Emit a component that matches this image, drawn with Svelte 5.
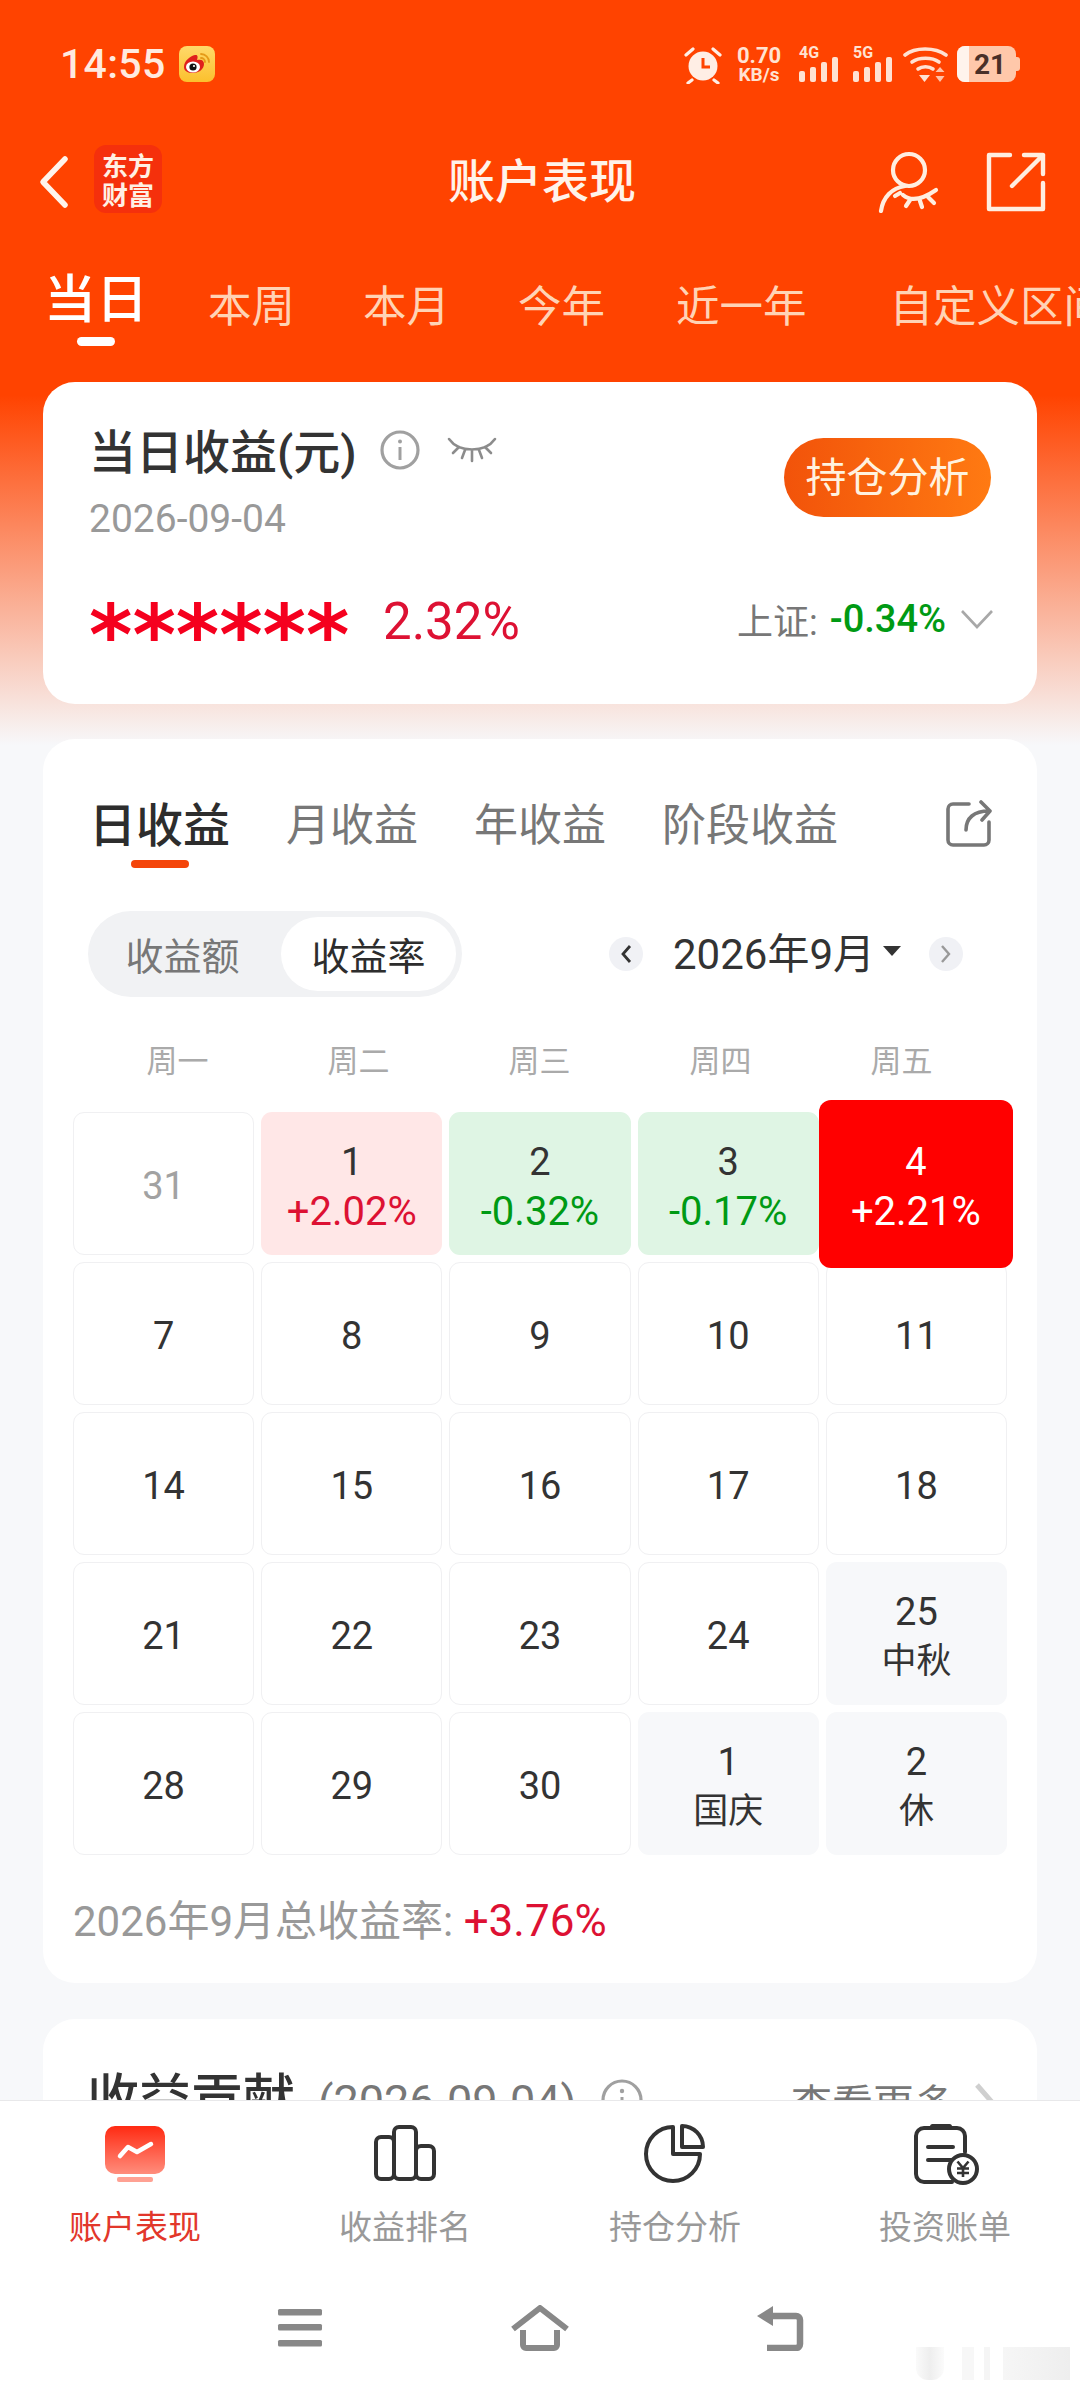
<script>
  const periods = ['本周', '本月', '今年', '近一年', '自定义区间'];
  const subTabs = ['月收益', '年收益', '阶段收益'];
  const weekdays = ['周一', '周二', '周三', '周四', '周五'];
  const cells = [
    { d: '31', cls: 'muted' },
    { d: '1', v: '+2.02%', cls: 'up' },
    { d: '2', v: '-0.32%', cls: 'down' },
    { d: '3', v: '-0.17%', cls: 'down' },
    { d: '4', v: '+2.21%', cls: 'active' },
    { d: '7' }, { d: '8' }, { d: '9' }, { d: '10' }, { d: '11' },
    { d: '14' }, { d: '15' }, { d: '16' }, { d: '17' }, { d: '18' },
    { d: '21' }, { d: '22' }, { d: '23' }, { d: '24' },
    { d: '25', v: '中秋', cls: 'holiday' },
    { d: '28' }, { d: '29' }, { d: '30' },
    { d: '1', v: '国庆', cls: 'holiday' },
    { d: '2', v: '休', cls: 'holiday' }
  ];
</script>

<div class="page">
  <div class="scroll">
    <div class="status">
      <div class="status-left">
        <span class="time">14:55</span>
        <svg class="weibo" width="36" height="36" viewBox="0 0 36 36">
          <defs>
            <linearGradient id="wb" x1="0" y1="0" x2="0" y2="1">
              <stop offset="0" stop-color="#ffd96a" />
              <stop offset="1" stop-color="#fbc02d" />
            </linearGradient>
          </defs>
          <rect width="36" height="36" rx="8" fill="url(#wb)" />
          <path d="M22 8a8 8 0 0 1 8 8M22 12a4 4 0 0 1 4 4" fill="none" stroke="#e59a18" stroke-width="1.8" stroke-linecap="round" />
          <path d="M5 21c0-6 6-11 11-12 3-.6 3 2 2 5 4-1 7 0 7 4 0 5-5 9-11 9-5 0-9-2-9-6z" fill="#e0201c" />
          <ellipse cx="14" cy="21" rx="7" ry="5.5" fill="#fff" />
          <circle cx="14" cy="21" r="3.6" fill="#111" />
          <circle cx="15" cy="20" r="1.1" fill="#fff" />
        </svg>
      </div>
      <div class="status-right">
        <svg class="alarm" width="38" height="38" viewBox="0 0 38 38">
          <circle cx="19" cy="20" r="14.5" fill="#ffeee5" />
          <path d="M19 12v9h7" fill="none" stroke="#ff4300" stroke-width="3" />
          <path d="M2 9l7-6M36 9l-7-6M8 34l-4 3M30 34l4 3" stroke="#ffeee5" stroke-width="3.2" stroke-linecap="round" />
        </svg>
        <div class="speed"><b>0.70</b><b class="kb">KB/s</b></div>
        <div class="sim first">
          <b>4G</b>
          <svg width="40" height="26" viewBox="0 0 40 26">
            <g fill="#ffe2d2">
              <rect x="0" y="14" width="6" height="11" rx="2" />
              <rect x="11" y="10" width="6" height="15" rx="2" />
              <rect x="22" y="5" width="6" height="20" rx="2" />
              <rect x="33" y="0" width="6" height="25" rx="2" />
            </g>
          </svg>
        </div>
        <div class="sim">
          <b>5G</b>
          <svg width="40" height="26" viewBox="0 0 40 26">
            <g fill="#ffe2d2">
              <rect x="0" y="14" width="6" height="11" rx="2" />
              <rect x="11" y="10" width="6" height="15" rx="2" />
              <rect x="22" y="5" width="6" height="20" rx="2" />
              <rect x="33" y="0" width="6" height="25" rx="2" />
            </g>
          </svg>
        </div>
        <svg class="wifi" width="46" height="37" viewBox="0 0 46 37">
          <g fill="none" stroke="#ffe2d2" stroke-width="3.6" stroke-linecap="round">
            <path d="M2 9C12 1 32 1 43 9" />
            <path d="M9 16c7-5 20-5 27 0" />
            <path d="M15 23c4-3 11-3 15 0" />
          </g>
          <path d="M16 29h11l-5.500 7z" fill="#ffe2d2" />
          <path d="M37 21l4.500 5h-9zM37 36l-4.500-6h9z" fill="#ffe2d2" opacity=".8" />
        </svg>
        <div class="battery">
          <div class="batt-body">
            <span class="batt-fill"></span>
            <span class="batt-num">21</span>
          </div>
          <span class="batt-cap"></span>
        </div>
      </div>
    </div>

    <div class="nav">
      <div class="nav-left">
        <svg width="32" height="54" viewBox="0 0 32 54">
          <path d="M27 4L5 27l22 23" fill="none" stroke="#fff4ec" stroke-width="5.500" stroke-linecap="round" stroke-linejoin="round" />
        </svg>
        <div class="logo"><span>东方</span><span>财富</span></div>
      </div>
      <div class="title">账户表现</div>
      <div class="nav-right">
        <svg width="62" height="62" viewBox="0 0 62 62">
          <g fill="none" stroke="#ffeee0" stroke-width="4.200" stroke-linecap="round">
            <circle cx="31" cy="19" r="16" />
            <path d="M27 35C14 37 5 46 3 60" />
            <path d="M25 44c7 6 17 6 33-5M32 49l-4 6M42 50l2 6M50 46l6 6M22 42l-5 3" />
          </g>
        </svg>
        <svg width="60" height="60" viewBox="0 0 60 60">
          <path d="M24 3H3v54h54V31M38 3h19v19M57 3L26 34" fill="none" stroke="#ffeee0" stroke-width="4.400" stroke-linejoin="round" stroke-linecap="round" />
        </svg>
      </div>
    </div>

    <div class="periods">
      <div class="period-active">
        <span>当日</span>
        <i></i>
      </div>
      {#each periods as p}
        <span class="period">{p}</span>
      {/each}
    </div>

    <section class="card summary">
      <div class="sum-top">
        <div>
          <div class="sum-title">
            <span>当日收益(元)</span>
            <svg class="info" width="42" height="42" viewBox="0 0 42 42">
              <circle cx="21" cy="21" r="18" fill="none" stroke="#a0a0a0" stroke-width="3.200" />
              <path d="M21 18v13" stroke="#a0a0a0" stroke-width="3" />
              <circle cx="21" cy="12.500" r="2" fill="#a0a0a0" />
            </svg>
            <svg class="eye" width="50" height="30" viewBox="0 0 50 30">
              <path d="M2 3c10 14 36 14 46 0M12 11L6 17M25 15v10M38 11l6 6M18 14l-3 8M32 14l3 8" fill="none" stroke="#8c8c8c" stroke-width="2.600" stroke-linecap="round" />
            </svg>
          </div>
          <div class="sum-date">2026-09-04</div>
        </div>
        <div class="sum-btn">持仓分析</div>
      </div>
      <div class="sum-bottom">
        <div class="sum-left">
          <span class="stars">******</span>
          <span class="pct">2.32%</span>
        </div>
        <div class="sum-index">
          <span class="idx-name">上证:</span>
          <span class="idx-val">-0.34%</span>
          <svg width="34" height="20" viewBox="0 0 34 20">
            <path d="M2 2l15 16L32 2" fill="none" stroke="#a8a8a8" stroke-width="2.600" />
          </svg>
        </div>
      </div>
    </section>

    <section class="card cal">
      <div class="subtabs">
        <div class="sub-active"><span>日收益</span><i></i></div>
        {#each subTabs as s}<span class="sub">{s}</span>{/each}
        <svg class="share" width="48" height="48" viewBox="0 0 48 48">
          <path d="M24 4H8a5 5 0 0 0-5 5v31a5 5 0 0 0 5 5h31a5 5 0 0 0 5-5V22" fill="none" stroke="#777" stroke-width="3.600" stroke-linecap="round" />
          <path d="M21 30c0-12 8-19 23-19M36 2l9 9-8 9" fill="none" stroke="#777" stroke-width="3.600" stroke-linecap="round" stroke-linejoin="round" />
        </svg>
      </div>

      <div class="controls">
        <div class="toggle">
          <span class="tg">收益额</span>
          <span class="tg on">收益率</span>
        </div>
        <div class="month">
          <span class="circle">
            <svg width="12" height="20" viewBox="0 0 12 20"><path d="M10 2L3 10l7 8" fill="none" stroke="#333" stroke-width="2.800" /></svg>
          </span>
          <span class="month-text">2026年9月</span>
          <i class="caret"></i>
          <span class="circle">
            <svg width="12" height="20" viewBox="0 0 12 20"><path d="M2 2l7 8-7 8" fill="none" stroke="#999" stroke-width="2.400" /></svg>
          </span>
        </div>
      </div>

      <div class="weekdays">
        {#each weekdays as w}<span>{w}</span>{/each}
      </div>

      <div class="grid">
        {#each cells as c}
          <div class="cell {c.cls ?? ''}">
            <span class="d">{c.d}</span>
            {#if c.v}<span class="v">{c.v}</span>{/if}
          </div>
        {/each}
      </div>

      <div class="total">2026年9月总收益率: <span>+3.76%</span></div>
    </section>

    <section class="card contrib">
      <div class="contrib-left">
        <span class="c-title">收益贡献</span>
        <span class="c-date">(2026-09-04)</span>
        <svg width="44" height="44" viewBox="0 0 44 44">
          <circle cx="22" cy="22" r="19" fill="none" stroke="#a0a0a0" stroke-width="3.200" />
          <circle cx="22" cy="13" r="2.200" fill="#a0a0a0" />
          <path d="M22 19v14" stroke="#a0a0a0" stroke-width="3" />
        </svg>
      </div>
      <div class="contrib-right">
        <span>查看更多</span>
        <svg width="22" height="36" viewBox="0 0 22 36"><path d="M4 2l14 16L4 34" fill="none" stroke="#cfcfcf" stroke-width="5" /></svg>
      </div>
    </section>
  </div>

  <div class="bottom">
    <div class="tabs">
      <div class="tab on">
        <svg width="62" height="62" viewBox="0 0 62 62">
          <defs>
            <linearGradient id="act" x1="0" y1="0" x2="0" y2="1">
              <stop offset="0" stop-color="#ff2a12" />
              <stop offset="1" stop-color="#ff8d7c" />
            </linearGradient>
          </defs>
          <rect x="1" y="2" width="60" height="48" rx="10" fill="url(#act)" />
          <rect x="13" y="53" width="36" height="5" rx="2" fill="#ffa193" />
          <path d="M16 32l8-9 9 5 14-8" fill="none" stroke="#fff" stroke-width="4.500" stroke-linecap="round" stroke-linejoin="round" />
        </svg>
        <span>账户表现</span>
      </div>
      <div class="tab">
        <svg width="62" height="62" viewBox="0 0 62 62">
          <g fill="none" stroke="#333" stroke-width="4">
            <rect x="2" y="13" width="18" height="42" rx="5" />
            <rect x="20" y="3" width="22" height="52" rx="5" />
            <rect x="42" y="22" width="18" height="33" rx="5" />
          </g>
        </svg>
        <span>收益排名</span>
      </div>
      <div class="tab">
        <svg width="62" height="62" viewBox="0 0 62 62">
          <path d="M29 3A27 27 0 1 0 56 30H29Z" fill="none" stroke="#333" stroke-width="4" stroke-linejoin="round" />
          <path d="M38 2V23H59A21 21 0 0 0 38 2Z" fill="none" stroke="#333" stroke-width="4" stroke-linejoin="round" />
        </svg>
        <span>持仓分析</span>
      </div>
      <div class="tab">
        <svg class="bill" width="62" height="62" viewBox="0 0 62 62">
          <path d="M51 28V12a8 8 0 0 0-8-8H10a8 8 0 0 0-8 8V50a8 8 0 0 0 8 8H38" fill="none" stroke="#333" stroke-width="4" stroke-linecap="round" />
          <rect x="16" y="0" width="22" height="5" rx="2.500" fill="#333" />
          <path d="M14 23H39M14 36H38" stroke="#333" stroke-width="4" stroke-linecap="round" />
          <circle cx="49" cy="45" r="14" fill="#fff" stroke="#333" stroke-width="4" />
          <path d="M43.500 37.500l5.500 6.500 5.500-6.500M43 44.500h12M43 49h12M49 44v9" fill="none" stroke="#333" stroke-width="2.600" />
        </svg>
        <span>投资账单</span>
      </div>
    </div>
    <div class="sysnav">
      <div class="sys">
        <svg width="46" height="38" viewBox="0 0 46 38">
          <g fill="#888"><rect x="1" y="0" width="44" height="6.500" rx="1.500" /><rect x="1" y="15" width="44" height="6.500" rx="1.500" /><rect x="1" y="31" width="44" height="6.500" rx="1.500" /></g>
        </svg>
      </div>
      <div class="sys">
        <svg width="60" height="46" viewBox="0 0 60 46">
          <path d="M3 24L30 3l27 21M13 25v15a3 3 0 0 0 3 3h28a3 3 0 0 0 3-3V25" fill="none" stroke="#888" stroke-width="6" stroke-linejoin="round" />
        </svg>
      </div>
      <div class="sys">
        <svg width="50" height="46" viewBox="0 0 50 46">
          <path d="M18 11h23a4 4 0 0 1 4 4v24a4 4 0 0 1-4 4H12" fill="none" stroke="#888" stroke-width="6.500" />
          <path d="M18 1v20L2 11z" fill="#888" />
        </svg>
      </div>
    </div>
    <div class="watermark">
      <i class="w1"></i><i class="w2"></i><i class="w3"></i><i class="w4"></i>
    </div>
  </div>
</div>

<style>
  :global(body) {
    margin: 0;
    background: #fff;
  }
  .page {
    width: 1080px;
    height: 2392px;
    display: flex;
    flex-direction: column;
    overflow: hidden;
    font-family: Roboto, "Noto Sans CJK SC", sans-serif;
    color: #333;
  }
  .scroll {
    height: 2100px;
    flex: none;
    overflow: hidden;
    background: linear-gradient(180deg, #ff4300 0, #ff4300 395px, #f7f8fa 745px);
  }

  /* status bar */
  .status {
    height: 134px;
    box-sizing: border-box;
    padding: 46px 60px 0 60px;
    display: flex;
    justify-content: space-between;
    align-items: flex-start;
  }
  .status-left {
    display: flex;
    align-items: center;
    gap: 13px;
  }
  .time {
    font-size: 41px;
    line-height: 36px;
    font-weight: 500;
    color: #ffeadf;
    letter-spacing: 0.3px;
  }
  .status-right {
    display: flex;
    align-items: flex-start;
    height: 38px;
  }
  .speed {
    display: flex;
    flex-direction: column;
    align-items: center;
    margin-left: 14px;
    width: 46px;
    color: #ffe2d2;
  }
  .speed b {
    font-size: 22px;
    line-height: 20px;
    font-weight: 700;
  }
  .speed .kb {
    font-size: 19px;
    line-height: 18px;
  }
  .sim {
    width: 40px;
    margin-left: 14px;
    display: flex;
    flex-direction: column;
    height: 38px;
    color: #ffe2d2;
  }
  .sim.first { margin-left: 17px; }
  .sim b {
    font-size: 16px;
    line-height: 14px;
    font-weight: 700;
    height: 12px;
  }
  .sim svg { margin-top: -1px; }
  .wifi { margin-left: 10px; }
  .battery {
    margin-left: 8px;
    width: 63px;
    height: 36px;
    display: flex;
    align-items: center;
  }
  .batt-body {
    width: 59px;
    height: 36px;
    border-radius: 8px;
    overflow: hidden;
    background: #ffc8aa;
    display: flex;
    align-items: center;
  }
  .batt-fill {
    width: 12px;
    height: 36px;
    background: #fff3ec;
  }
  .batt-num {
    margin-left: 3px;
    width: 36px;
    text-align: center;
    font-size: 28px;
    font-weight: 700;
    color: #4a3028;
  }
  .batt-cap {
    width: 4px;
    height: 14px;
    background: #ffc8aa;
    border-radius: 0 3px 3px 0;
  }

  /* nav */
  .nav {
    height: 96px;
    display: grid;
    grid-template-columns: 1fr auto 1fr;
    align-items: center;
    padding: 0 34px 0 38px;
  }
  .nav-left {
    display: flex;
    align-items: center;
    gap: 24px;
  }
  .logo {
    width: 68px;
    height: 68px;
    margin-top: -6px;
    border-radius: 12px;
    background: #f5300c;
    display: flex;
    flex-direction: column;
    align-items: center;
    justify-content: center;
    color: #fff0e4;
    font-size: 26px;
    line-height: 29px;
    font-weight: 700;
    font-family: "Noto Sans CJK SC", sans-serif;
  }
  .title {
    font-size: 47px;
    line-height: 52px;
    font-weight: 500;
    color: #fff3ea;
  }
  .nav-right {
    display: flex;
    justify-content: flex-end;
    align-items: center;
    gap: 46px;
  }

  /* periods */
  .periods {
    height: 152px;
    box-sizing: border-box;
    display: flex;
    align-items: flex-start;
    gap: 68px;
    padding: 45px 0 0 44px;
    overflow: hidden;
    white-space: nowrap;
  }
  .period-active {
    flex: none;
    display: flex;
    flex-direction: column;
    align-items: center;
    font-size: 52px;
    line-height: 52px;
    font-weight: 500;
    color: #fff;
    margin-right: -8px;
  }
  .period-active i {
    display: block;
    width: 38px;
    height: 9px;
    margin-top: 10px;
    border-radius: 5px;
    background: #fff;
  }
  .period {
    flex: none;
    font-size: 43.5px;
    line-height: 44px;
    margin-top: 11px;
    color: #ffd3b5;
  }
  .period:nth-child(5) { margin-left: 3px; }
  .period:last-child { margin-left: 15px; }

  /* cards */
  .card {
    margin: 0 43px;
    background: #fff;
    border-radius: 32px;
  }
  .summary {
    height: 322px;
    box-sizing: border-box;
    padding: 45px 46px 0 46px;
  }
  .sum-top {
    display: flex;
    justify-content: space-between;
    align-items: flex-start;
    height: 111px;
  }
  .sum-title {
    display: flex;
    align-items: center;
    height: 46px;
    margin-top: 3px;
    font-size: 47px;
    line-height: 46px;
    font-weight: 500;
    color: #333;
  }
  .info { margin-left: 22px; margin-top: -6px; }
  .eye { margin-left: 26px; margin-top: -4px; }
  .sum-date {
    margin-top: 24px;
    font-size: 39px;
    line-height: 38px;
    color: #999;
  }
  .sum-btn {
    margin-top: 11px;
    width: 207px;
    height: 79px;
    border-radius: 40px;
    background: linear-gradient(90deg, #f2530a, #ff7a12);
    color: #fff2df;
    font-size: 41px;
    line-height: 80px;
    text-align: center;
  }
  .sum-bottom {
    display: flex;
    justify-content: space-between;
    align-items: center;
    margin-top: 64px;
    height: 40px;
  }
  .sum-left {
    display: flex;
    align-items: center;
    gap: 36px;
  }
  .stars {
    height: 40px;
    line-height: 68px;
    font-family: "DejaVu Sans", sans-serif;
    font-size: 83px;
    font-weight: 700;
    color: #f5001e;
    width: 258px;
    display: block;
    white-space: nowrap;
  }
  .pct {
    font-size: 51px;
    line-height: 48px;
    color: #dd1133;
  }
  .sum-index {
    display: flex;
    align-items: center;
    margin-right: -3px;
    margin-bottom: 6px;
  }
  .idx-name { color: #777; font-size: 36px; }
  .idx-val {
    color: #009a14;
    font-size: 38px;
    font-weight: 500;
    margin-left: 12px;
    margin-right: 14px;
  }

  /* calendar card */
  .cal {
    margin-top: 35px;
    padding: 62px 30px 40px;
  }
  .subtabs {
    display: flex;
    align-items: flex-start;
    padding-left: 16px;
    height: 110px;
  }
  .sub-active {
    flex: none;
    display: flex;
    flex-direction: column;
    align-items: center;
    padding-top: 1px;
    font-size: 47px;
    line-height: 47px;
    font-weight: 500;
    color: #2d2d2d;
  }
  .sub-active i {
    display: block;
    width: 58px;
    height: 8px;
    margin-top: 11px;
    border-radius: 4px;
    background: #f4450a;
  }
  .sub {
    flex: none;
    margin-left: 56px;
    padding-top: 3px;
    font-size: 44px;
    line-height: 45px;
    color: #777;
  }
  .share {
    margin-left: auto;
    margin-right: 14px;
    margin-top: -1px;
  }
  .controls {
    display: flex;
    justify-content: space-between;
    align-items: center;
    padding: 0 44px 0 15px;
    height: 86px;
  }
  .toggle {
    width: 374px;
    height: 86px;
    box-sizing: border-box;
    padding: 6px;
    border-radius: 43px;
    background: #f1f2f4;
    display: flex;
    align-items: center;
  }
  .tg {
    flex: 1;
    text-align: center;
    font-size: 38px;
    padding-top: 6px;
    line-height: 68px;
    color: #777;
    margin-left: -10px;
  }
  .tg.on {
    flex: none;
    margin-left: 0;
    width: 175px;
    background: #fff;
    border-radius: 37px;
    color: #2d2d2d;
  }
  .month {
    display: flex;
    align-items: center;
  }
  .circle {
    width: 34px;
    height: 34px;
    border-radius: 50%;
    background: #f0f1f5;
    display: flex;
    align-items: center;
    justify-content: center;
  }
  .month-text {
    margin-left: 30px;
    padding-top: 2px;
    font-size: 42px;
    line-height: 50px;
    color: #333;
  }
  .caret {
    width: 0;
    height: 0;
    margin: -6px 28px 0 8px;
    border-left: 9px solid transparent;
    border-right: 9px solid transparent;
    border-top: 10px solid #333;
  }
  .weekdays {
    display: grid;
    grid-template-columns: repeat(5, 181px);
    padding-left: 14px;
    margin-top: 49px;
    margin-bottom: 35px;
    text-align: center;
    font-size: 31px;
    line-height: 31px;
    color: #aaa;
  }
  .grid {
    display: grid;
    grid-template-columns: repeat(5, 1fr);
    grid-auto-rows: 143px;
    gap: 7px;
  }
  .cell {
    box-sizing: border-box;
    border: 1.5px solid #f0f0f2;
    border-radius: 11px;
    padding-top: 6px;
    display: flex;
    flex-direction: column;
    align-items: center;
    justify-content: center;
    background: #fff;
  }
  .d {
    font-size: 38px;
    line-height: 49px;
    color: #333;
  }
  .v {
    font-size: 40px;
    line-height: 49px;
    color: #333;
  }
  .muted .d { color: #a2a2a2; }
  .up, .down, .holiday, .active { border: none; }
  .up { background: #ffe7e7; }
  .up .v { color: #dd1133; }
  .down { background: #dff5e4; }
  .down .v { color: #009a14; }
  .holiday { background: #f7f8fa; }
  .holiday .v { font-size: 35px; }
  .active {
    background: #ff0000;
    margin: -12px -6px -13px -7px;
    z-index: 1;
    border-radius: 12px;
  }
  .active .d, .active .v { color: #fff; }
  .total {
    margin-top: 45px;
    font-size: 42px;
    line-height: 42px;
    color: #999;
  }
  .total span {
    font-size: 44px;
    color: #dd1133;
  }

  .contrib {
    margin-top: 36px;
    height: 200px;
    box-sizing: border-box;
    padding: 52px 42px 0 44px;
    display: flex;
    justify-content: space-between;
    align-items: flex-start;
  }
  .contrib-left, .contrib-right {
    display: flex;
    align-items: center;
  }
  .c-title {
    font-size: 52px;
    line-height: 56px;
    font-weight: 500;
  }
  .c-date {
    margin-left: 23px;
    margin-top: 4px;
    font-size: 45px;
    color: #777;
  }
  .contrib-left svg { margin-left: 24px; }
  .contrib-right span {
    font-size: 41px;
    color: #777;
    margin-right: 18px;
  }

  /* bottom */
  .bottom {
    flex: 1;
    box-sizing: border-box;
    border-top: 1.5px solid #e8e8ea;
    background: #fff;
    position: relative;
  }
  .tabs {
    display: grid;
    grid-template-columns: repeat(4, 270px);
    padding-top: 23px;
  }
  .tab {
    display: flex;
    flex-direction: column;
    align-items: center;
    font-size: 33px;
    line-height: 36px;
    color: #999;
  }
  .tab svg { height: 62px; overflow: visible; }
  .tab span { margin-top: 24px; }
  .tab.on { color: #e2372b; }
  .sysnav {
    display: grid;
    grid-template-columns: repeat(3, 240px);
    justify-content: center;
    margin-top: 59px;
  }
  .sys {
    height: 46px;
    display: flex;
    align-items: center;
    justify-content: center;
  }
  .watermark {
    position: absolute;
    right: 10px;
    bottom: 12px;
    height: 33px;
    display: flex;
  }
  .watermark i {
    display: block;
    background: #f3f3f3;
  }
  .watermark .w1 {
    width: 28px;
    background: linear-gradient(90deg, #fafafa, #eeeeee 50%, #fbfbfb);
    border-radius: 0 0 12px 12px;
  }
  .watermark .w2 { width: 12px; margin-left: 18px; background: #f7f7f7; }
  .watermark .w3 { width: 6px; margin-left: 10px; background: #f5f5f5; }
  .watermark .w4 {
    width: 67px;
    margin-left: 13px;
    background: linear-gradient(90deg, #f6f6f6, #eeeeee);
  }
</style>
